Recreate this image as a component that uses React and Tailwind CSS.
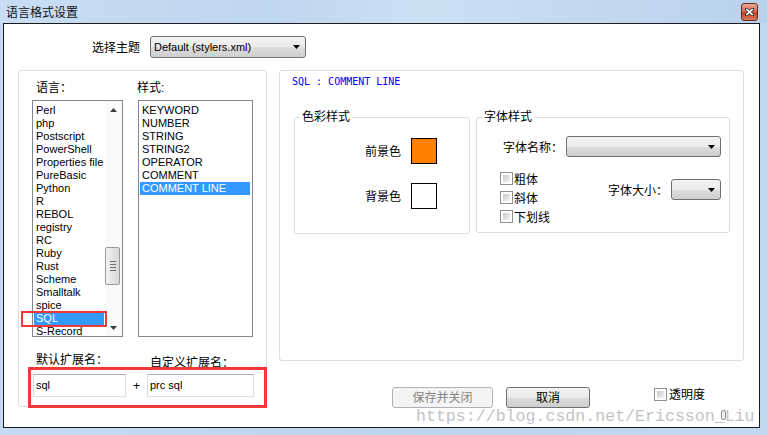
import React from "react";

const langs = ["Perl","php","Postscript","PowerShell","Properties file","PureBasic","Python","R","REBOL","registry","RC","Ruby","Rust","Scheme","Smalltalk","spice","SQL","S-Record"];
const styles = ["KEYWORD","NUMBER","STRING","STRING2","OPERATOR","COMMENT","COMMENT LINE"];

function Arrow() {
  return (
    <svg width="7" height="4" viewBox="0 0 7 4" className="shrink-0">
      <path d="M0 0H7L3.5 4Z" fill="#000" />
    </svg>
  );
}

function Check() {
  return (
    <span className="box-border block h-[13px] w-[13px] shrink-0 border border-[#8e8f8f] bg-white p-[2px]">
      <span className="block h-full w-full bg-[linear-gradient(135deg,#c9c9c9,#f3f3f3)]" />
    </span>
  );
}

function CloseBtn() {
  return (
    <div className="box-border flex h-[18px] w-[17px] items-center justify-center rounded-[3px] border border-[#6e2b20] bg-[linear-gradient(#eaa796,#d86d55_45%,#c5401f_55%,#d97a5c)]">
      <svg width="9" height="8" viewBox="0 0 9 8">
        <path d="M1 1L8 7M8 1L1 7" stroke="#3a3a3a" strokeWidth="3.2" strokeLinecap="square" />
        <path d="M1.3 1.2L7.7 6.8M7.7 1.2L1.3 6.8" stroke="#ffffff" strokeWidth="1.6" />
      </svg>
    </div>
  );
}

export default function App() {
  return (
    <div className="relative h-[435px] w-[767px] overflow-hidden bg-[linear-gradient(90deg,#c6dbf1,#bed5ee_50%,#c3d9f0)] text-[12px] text-black [font-family:'Liberation_Sans','Noto_Sans_CJK_SC',sans-serif]">
      {/* title bar */}
      <div className="flex h-[23px] items-center justify-between bg-[linear-gradient(90deg,#c9def4,#bfd6ef_35%,#cde1f5_55%,#b9d1eb)] pl-[6px] pr-[9px]">
        <span className="pt-[1px] text-[12px] leading-[14px] text-[#111] [font-family:'Noto_Sans_CJK_SC',sans-serif]">语言格式设置</span>
        <CloseBtn />
      </div>

      <div className="flex h-[405px]">
        <div className="w-[3px] shrink-0" />
        <div className="box-border h-full w-[757px] shrink-0 border border-[#1c1c1c] bg-white">
          {/* theme row */}
          <div className="flex items-center pl-[88px] pt-[12px]">
            <span className="w-[50px] pt-[2px] leading-[14px]">选择主题</span>
            <div className="ml-[8px] box-border flex h-[22px] w-[156px] items-center justify-between rounded-[3px] border border-[#707070] bg-[linear-gradient(#f2f2f2,#ebebeb_50%,#dddddd_50%,#cfcfcf)] pl-[3px] pr-[5px] text-[11px]">
              <span>Default (stylers.xml)</span>
              <Arrow />
            </div>
          </div>

          {/* main row */}
          <div className="mt-[12px] flex items-start gap-[12px] pl-[14px]">
            {/* left box */}
            <div className="box-border h-[337px] w-[249px] shrink-0 rounded-[3px] border border-[#d5dfe5]">
              <div className="flex pt-[10px] leading-[14px]">
                <span className="ml-[17px] w-[101px]">语言：</span>
                <span>样式:</span>
              </div>
              <div className="ml-[13px] mt-[5px] flex gap-[15px]">
                {/* language list */}
                <div className="box-border flex h-[237px] w-[91px] border border-[#828790] bg-white">
                  <div className="flex-1 overflow-hidden px-[1px] pt-[3px] text-[11px] leading-[13px]">
                    {langs.map((l) => (
                      <div key={l} className={l === "SQL" ? "whitespace-nowrap bg-[#3399ff] pl-[2px] text-white" : "whitespace-nowrap pl-[2px]"}>
                        {l}
                      </div>
                    ))}
                  </div>
                  <div className="flex w-[17px] shrink-0 flex-col bg-[#fafafa]">
                    <div className="flex h-[17px] items-center justify-center">
                      <svg width="7" height="4" viewBox="0 0 7 4"><path d="M0 4H7L3.5 0Z" fill="#3c3c3c" /></svg>
                    </div>
                    <div className="flex-1">
                      <div className="mt-[129px] box-border flex h-[38px] w-[15px] flex-col items-center justify-center gap-[2px] rounded-[2px] border border-[#9a9a9a] bg-[linear-gradient(90deg,#f3f3f3,#e4e4e4_50%,#d8d8d8)]">
                        <span className="block h-[1px] w-[6px] bg-[#707070]" />
                        <span className="block h-[1px] w-[6px] bg-[#707070]" />
                        <span className="block h-[1px] w-[6px] bg-[#707070]" />
                        <span className="block h-[1px] w-[6px] bg-[#707070]" />
                      </div>
                    </div>
                    <div className="flex h-[17px] items-center justify-center">
                      <svg width="7" height="4" viewBox="0 0 7 4"><path d="M0 0H7L3.5 4Z" fill="#3c3c3c" /></svg>
                    </div>
                  </div>
                </div>
                {/* style list */}
                <div className="box-border h-[237px] w-[115px] border border-[#828790] bg-white px-[1px] pr-[2px] pt-[3px] text-[11px] leading-[13px]">
                  {styles.map((s) => (
                    <div key={s} className={s === "COMMENT LINE" ? "whitespace-nowrap bg-[#3399ff] pl-[2px] text-white" : "whitespace-nowrap pl-[2px]"}>
                      {s}
                    </div>
                  ))}
                </div>
              </div>
              <div className="mt-[16px] flex items-start leading-[14px]">
                <span className="ml-[17px] w-[114px]">默认扩展名：</span>
                <span className="mt-[3px]">自定义扩展名：</span>
              </div>
              <div className="ml-[14px] mt-[4px] flex items-center text-[11px]">
                <div className="box-border flex h-[23px] w-[93px] items-center border border-[#dbdfe6] border-t-[#abadb3] pl-[2px]">sql</div>
                <span className="w-[21px] text-center text-[12px]">+</span>
                <div className="box-border flex h-[23px] w-[107px] items-center border border-[#dbdfe6] border-t-[#abadb3] pl-[2px]">prc sql</div>
              </div>
            </div>

            {/* right column */}
            <div className="flex w-[465px] shrink-0 flex-col">
              <div className="box-border h-[291px] w-[465px] rounded-[3px] border border-[#d5dfe5]">
                <div className="pl-[12px] pt-[5px] text-[10px] leading-[12px] text-[#0000ff] [font-family:'DejaVu_Sans_Mono',monospace]">
                  SQL : COMMENT LINE
                </div>
                <div className="mt-[22px] flex items-start gap-[6px] pl-[14px]">
                  <fieldset className="box-border w-[176px] min-w-0 rounded-[3px] border border-[#d5dfe5]">
                    <legend className="ml-[5px] px-[2px] leading-[14px]">色彩样式</legend>
                    <div className="flex flex-col items-end gap-[19px] pb-[24px] pr-[32px] pt-[14px]">
                      <div className="flex items-center">
                        <span className="mr-[10px] pt-[1px] leading-[14px]">前景色</span>
                        <span className="box-border block h-[26px] w-[26px] border border-black bg-[#ff8000]" />
                      </div>
                      <div className="flex items-center">
                        <span className="mr-[10px] pt-[1px] leading-[14px]">背景色</span>
                        <span className="box-border block h-[26px] w-[26px] border border-black bg-white" />
                      </div>
                    </div>
                  </fieldset>
                  <fieldset className="box-border w-[254px] min-w-0 rounded-[3px] border border-[#d5dfe5]">
                    <legend className="ml-[5px] px-[2px] leading-[14px]">字体样式</legend>
                    <div className="flex items-center justify-end pr-[8px] pt-[12px]">
                      <span className="mr-[3px] pt-[2px] leading-[14px]">字体名称：</span>
                      <div className="box-border flex h-[21px] w-[155px] items-center justify-end rounded-[3px] border border-[#707070] bg-[linear-gradient(#f2f2f2,#ebebeb_50%,#dddddd_50%,#cfcfcf)] pr-[5px]">
                        <Arrow />
                      </div>
                    </div>
                    <div className="mt-[12px] flex items-start pb-[6px]">
                      <div className="flex flex-col pl-[23px]">
                        {["粗体", "斜体", "下划线"].map((t) => (
                          <div key={t} className="flex h-[19px] items-center">
                            <Check />
                            <span className="ml-[1px] pt-[2px] leading-[14px]">{t}</span>
                          </div>
                        ))}
                      </div>
                      <div className="ml-auto mt-[10px] flex items-center pr-[8px]">
                        <span className="mr-[3px] pt-[2px] leading-[14px]">字体大小：</span>
                        <div className="box-border flex h-[21px] w-[50px] items-center justify-end rounded-[3px] border border-[#707070] bg-[linear-gradient(#f2f2f2,#ebebeb_50%,#dddddd_50%,#cfcfcf)] pr-[5px]">
                          <Arrow />
                        </div>
                      </div>
                    </div>
                  </fieldset>
                </div>
              </div>

              {/* buttons row */}
              <div className="mt-[26px] flex items-start pl-[113px]">
                <div className="box-border flex h-[21px] w-[101px] items-center justify-center rounded-[3px] border border-[#adb2b5] bg-[#f4f4f4] pt-[1px] text-[#838383]">
                  保存并关闭
                </div>
                <div className="ml-[13px] box-border flex h-[21px] w-[84px] items-center justify-center rounded-[3px] border border-[#707070] bg-[linear-gradient(#f2f2f2,#ebebeb_50%,#dddddd_50%,#cfcfcf)] pt-[1px]">
                  取消
                </div>
                <div className="ml-[64px] -mt-[1px] flex flex-col">
                  <div className="flex items-center">
                    <Check />
                    <span className="ml-[2px] pt-[2px] leading-[14px]">透明度</span>
                  </div>
                  <div className="ml-[67px] mt-[8px] box-border h-[10px] w-[5px] rounded-[2px] border border-[#8e8f8f] bg-[#ececec]" />
                </div>
              </div>
            </div>
          </div>
        </div>
      </div>

      {/* annotation boxes */}
      <div className="pointer-events-none absolute left-[21px] top-[311px] box-border h-[16px] w-[86px] border-2 border-[#f03a3a]" />
      <div className="pointer-events-none absolute left-[28px] top-[367px] box-border h-[41px] w-[239px] border-[3px] border-[#f03a3a]" />

      {/* watermark */}
      <div className="pointer-events-none absolute left-[416px] top-[407px] whitespace-nowrap text-[16.6px] leading-[20px] text-[#bdbdbd] opacity-90 [font-family:'Liberation_Mono',monospace]">
        https://blog.csdn.net/Ericsson_Liu
      </div>
    </div>
  );
}
